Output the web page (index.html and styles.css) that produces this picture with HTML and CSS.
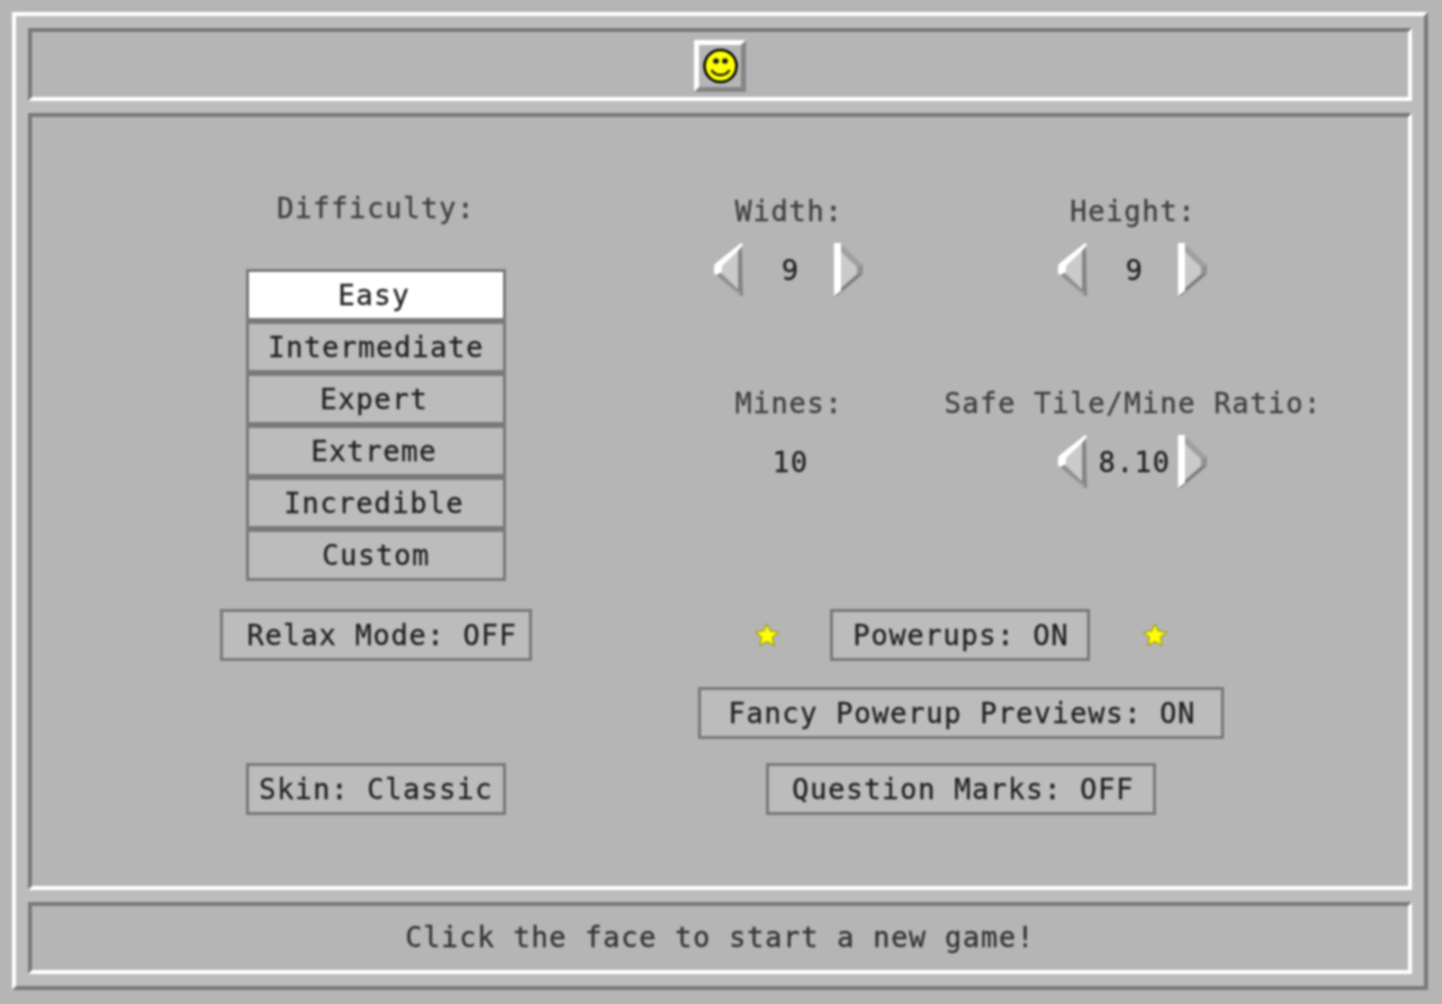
FILE: index.html
```html
<!DOCTYPE html>
<html lang="en">
<head>
    <meta charset="UTF-8">
    <title>Minesweeper</title>
    <link rel="stylesheet" href="styles.css">
</head>
<body>
    <div class="frame">
        <div class="panel top-bar">
            <button class="face-btn">
                <svg width="38" height="38" viewBox="0 0 38 38">
                    <circle cx="19.5" cy="19" r="16" fill="#ffff00" stroke="#000" stroke-width="2.6"/>
                    <circle cx="15" cy="14" r="2.8" fill="#111"/>
                    <circle cx="24" cy="14" r="2.8" fill="#111"/>
                    <path d="M10.5 23 Q13.5 28 19.5 28 Q25.5 28 28.5 23" fill="none" stroke="#111" stroke-width="2.4"/>
                </svg>
            </button>
        </div>

        <div class="panel main">
            <div class="settings">
                <!-- difficulty -->
                <div class="difficulty">
                    <div class="label diff-label">Difficulty:</div>
                    <div class="diff-list">
                        <button class="btn selected nudge">Easy</button>
                        <button class="btn">Intermediate</button>
                        <button class="btn nudge">Expert</button>
                        <button class="btn nudge">Extreme</button>
                        <button class="btn nudge">Incredible</button>
                        <button class="btn">Custom</button>
                    </div>
                </div>

                <div class="params">
                    <div class="param">
                        <div class="label">Width:</div>
                        <div class="stepper">
                            <svg class="arrow" width="30" height="54" viewBox="0 0 30 54"><use href="#arrow-left"/></svg>
                            <span class="value">9</span>
                            <svg class="arrow" width="30" height="54" viewBox="0 0 30 54"><use href="#arrow-right"/></svg>
                        </div>
                    </div>
                    <div class="param">
                        <div class="label">Height:</div>
                        <div class="stepper">
                            <svg class="arrow" width="30" height="54" viewBox="0 0 30 54"><use href="#arrow-left"/></svg>
                            <span class="value">9</span>
                            <svg class="arrow" width="30" height="54" viewBox="0 0 30 54"><use href="#arrow-right"/></svg>
                        </div>
                    </div>
                    <div class="param">
                        <div class="label">Mines:</div>
                        <div class="stepper">
                            <span class="value">10</span>
                        </div>
                    </div>
                    <div class="param">
                        <div class="label">Safe Tile/Mine Ratio:</div>
                        <div class="stepper">
                            <svg class="arrow" width="30" height="54" viewBox="0 0 30 54"><use href="#arrow-left"/></svg>
                            <span class="value">8.10</span>
                            <svg class="arrow" width="30" height="54" viewBox="0 0 30 54"><use href="#arrow-right"/></svg>
                        </div>
                    </div>
                </div>

                <div class="cell row-relax">
                    <button class="btn relax">Relax Mode: OFF</button>
                </div>
                <div class="cell row-relax">
                    <svg class="star" width="26" height="26" viewBox="0 0 26 26"><use href="#star"/></svg>
                    <button class="btn power">Powerups: ON</button>
                    <svg class="star" width="26" height="26" viewBox="0 0 26 26"><use href="#star"/></svg>
                </div>

                <div class="cell row-fancy"></div>
                <div class="cell row-fancy">
                    <button class="btn fancy">Fancy Powerup Previews: ON</button>
                </div>

                <div class="cell">
                    <button class="btn skin">Skin: Classic</button>
                </div>
                <div class="cell">
                    <button class="btn question">Question Marks: OFF</button>
                </div>
            </div>
        </div>

        <div class="panel status">Click the face to start a new game!</div>
    </div>

    <!-- shared icons -->
    <svg class="defs" width="0" height="0">
        <defs>
            <g id="arrow-left">
                <polygon points="0,22 28,0 29,52 0,30" fill="#cacaca"/>
                <polygon points="24,6 28,1 29,53 27,53 24,47" fill="#858585"/>
                <polygon points="6,29 24,46 24,52 27,53 2,32" fill="#929292"/>
                <polygon points="0,23 2,20 27,0 29,2 24,8 8,23 8,29 2,32 0,30" fill="#ffffff"/>
            </g>
            <g id="arrow-right">
                <polygon points="0,0 29,23 29,30 0,53" fill="#cacaca"/>
                <polygon points="6,0 29,22 29,26 23,24 6,8" fill="#a0a0a0"/>
                <polygon points="23,24 29,22 29,31 23,31" fill="#929292"/>
                <polygon points="6,46 23,31 29,31 3,53 0,53" fill="#808080"/>
                <polygon points="0,0 7,0 7,48 0,53" fill="#ffffff"/>
            </g>
            <g id="star">
                <polygon points="13,2 16.4,9 24.5,10 18.6,15.6 20.2,23.5 13,19.6 5.8,23.5 7.4,15.6 1.5,10 9.6,9" fill="#ffff00" stroke="#a8a830" stroke-width="1.6" stroke-linejoin="round"/>
            </g>
        </defs>
    </svg>
</body>
</html>
```

FILE: styles.css
```css
* {
    box-sizing: border-box;
}

body {
    margin: 0;
    padding: 12px 14px 14px 12px;
    height: 1004px;
    background: #b5b5b5;
    font-family: "DejaVu Sans Mono", monospace;
    font-size: 28px;
    letter-spacing: 1.13px;
    color: #222;
    -webkit-text-stroke: 0.3px currentColor;
    overflow: hidden;
}

/* the original is an upscaled low-res canvas, so everything is a little soft */
.frame {
    height: 978px;
    padding: 12px;
    display: flex;
    flex-direction: column;
    gap: 12px;
    background: #bcbcbc;
    border: 4px solid;
    border-color: #fff #7a7a7a #7a7a7a #fff;
    filter: blur(0.8px);
}

.panel {
    background: #b5b5b5;
    border: 4px solid;
    border-color: #7a7a7a #fff #fff #7a7a7a;
}

.top-bar {
    height: 73px;
    flex: none;
    display: flex;
    justify-content: center;
    padding-top: 8px;
}

.face-btn {
    width: 52px;
    height: 52px;
    padding: 0;
    display: flex;
    align-items: center;
    justify-content: center;
    background: #b5b5b5;
    border: 5px solid;
    border-color: #fff #858585 #858585 #fff;
}

.main {
    flex: 1;
    padding: 68px 0 0 188px;
}

.status {
    height: 72px;
    flex: none;
    display: flex;
    align-items: center;
    justify-content: center;
    padding-bottom: 2px;
    color: #333;
}

.settings {
    display: grid;
    grid-template-columns: 312px 688px;
    column-gap: 85px;
    row-gap: 24px;
}

.label {
    color: #404040;
    white-space: nowrap;
    line-height: 52px;
    text-align: center;
}

.difficulty {
    display: flex;
    flex-direction: column;
    align-items: center;
}

.diff-label {
    margin: -2px 0 34px;
}

.diff-list {
    display: flex;
    flex-direction: column;
    width: 260px;
}

.btn {
    height: 52px;
    padding: 0;
    font: inherit;
    letter-spacing: inherit;
    color: #222;
    white-space: nowrap;
    background: #bcbcbc;
    border: 3px solid #7a7a7a;
}

.btn.selected {
    background: #fff;
}

.btn.nudge {
    padding-right: 4px;
}

.params {
    display: grid;
    grid-template-columns: 344px 344px;
    grid-auto-rows: 192px;
}

.param {
    display: flex;
    flex-direction: column;
    align-items: center;
}

.param .label {
    padding-top: 1px;
}

.stepper {
    display: flex;
    align-items: center;
    justify-content: center;
    height: 54px;
    margin-top: 5px;
}

.value {
    width: 90px;
    padding-left: 3px;
    text-align: center;
    white-space: nowrap;
}

.cell {
    display: flex;
    justify-content: center;
    align-items: center;
}

.row-relax {
    margin-top: 4px;
}

.row-fancy {
    margin-top: 2px;
}

.star {
    flex: none;
}

.relax {
    width: 312px;
    padding-left: 12px;
}

.power {
    width: 260px;
    padding-left: 2px;
    margin: 0 52px 0 50px;
}

.fancy {
    width: 526px;
    padding-left: 2px;
}

.skin {
    width: 260px;
}

.question {
    width: 390px;
    padding-left: 4px;
}

.defs {
    position: absolute;
}
```
